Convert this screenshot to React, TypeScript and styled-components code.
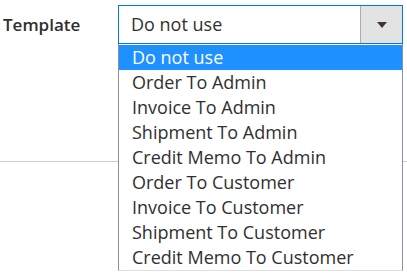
import React from 'react'
import styled, { createGlobalStyle } from 'styled-components'

const GlobalStyle = createGlobalStyle`
  body {
    margin: 0;
    background: #fff;
    font-family: 'Open Sans', 'Noto Sans', sans-serif;
    color: #303030;
  }
`

const options = [
  'Do not use',
  'Order To Admin',
  'Invoice To Admin',
  'Shipment To Admin',
  'Credit Memo To Admin',
  'Order To Customer',
  'Invoice To Customer',
  'Shipment To Customer',
  'Credit Memo To Customer',
]

const App = () => {
  const selected = 0
  return (
    <Page>
      <GlobalStyle />
      <Field>
        <Label>Template</Label>
        <SelectWrap>
          <Select>
            <Value>{options[selected]}</Value>
            <ArrowButton>
              <svg width="10" height="6" viewBox="0 0 10 6">
                <path d="M0 0h10L5 6z" fill="#41362f" />
              </svg>
            </ArrowButton>
          </Select>
          <Menu>
            {options.map((o, i) => (
              <Option key={o} active={i === selected}>
                {o}
              </Option>
            ))}
          </Menu>
        </SelectWrap>
      </Field>
      <Divider />
    </Page>
  )
}

export default App

const Page = styled.div`
  width: 407px;
  height: 276px;
  overflow: hidden;
  padding-top: 5px;
  box-sizing: border-box;
`

const Field = styled.div`
  display: flex;
  align-items: flex-start;
  height: 39px;
`

const Label = styled.div`
  width: 118px;
  padding-left: 3px;
  box-sizing: border-box;
  font-size: 17px;
  font-weight: 600;
  line-height: 40px;
  color: #303030;
`

const SelectWrap = styled.div`
  position: relative;
  width: 285px;
  z-index: 1;
`

const Select = styled.div`
  display: flex;
  height: 39px;
  border: 1px solid #007bdb;
  box-sizing: border-box;
  background: #fff;
`

const Value = styled.div`
  flex: 1;
  padding-left: 12px;
  font-size: 18px;
  line-height: 37px;
  color: #303030;
`

const ArrowButton = styled.div`
  width: 41px;
  background: #e3e3e3;
  border-left: 1px solid #adadad;
  display: flex;
  align-items: center;
  justify-content: center;
`

const Menu = styled.div`
  position: absolute;
  top: 39px;
  left: 0;
  right: 0;
  background: #fff;
  border: 1px solid #7f94b2;
  border-top: none;
  border-bottom-color: #e0e0e0;
  box-sizing: border-box;
`

const Option = styled.div<{ active?: boolean }>`
  height: 25px;
  padding-left: 13px;
  font-size: 18px;
  line-height: 25px;
  white-space: nowrap;
  background: ${({ active }) => (active ? '#1e90ff' : '#fff')};
  color: ${({ active }) => (active ? '#fff' : '#303030')};
  &:first-child {
    margin-top: 1px;
  }
`

const Divider = styled.div`
  margin-top: 117px;
  height: 1px;
  background: #cccccc;
`
